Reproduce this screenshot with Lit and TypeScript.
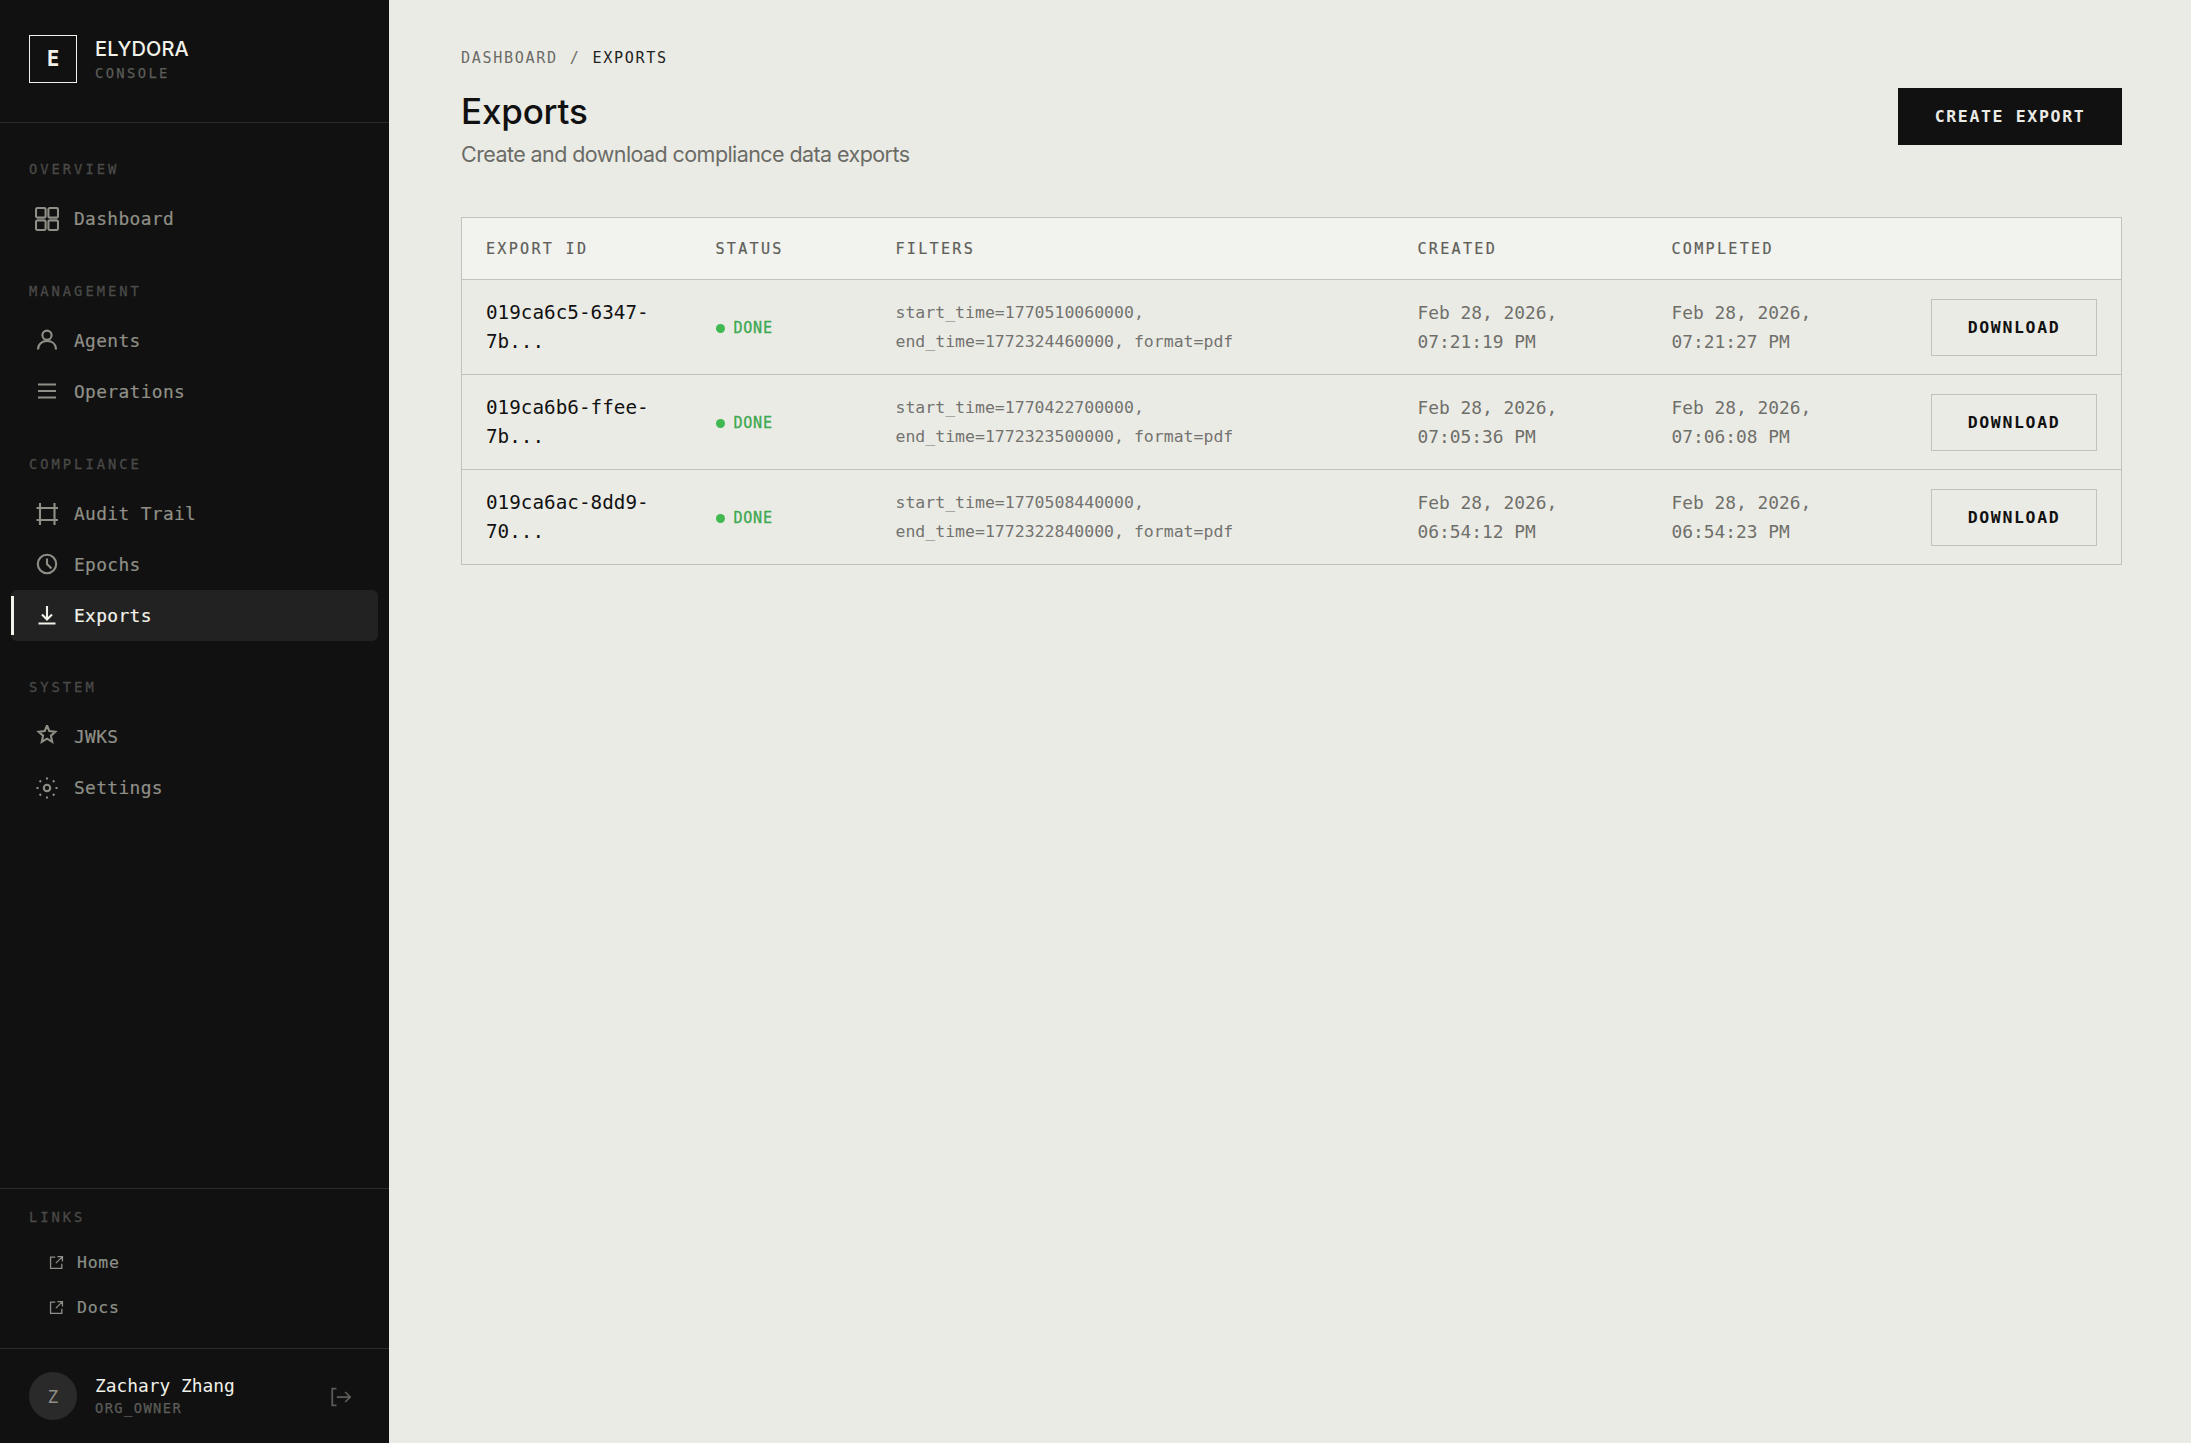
import { LitElement, css, html, svg } from 'lit'
import { customElement } from 'lit/decorators.js'

const icons = {
  dashboard: svg`<rect x="1" y="1" width="9.6" height="9.6" rx="1.6"/><rect x="13.4" y="1" width="9.6" height="9.6" rx="1.6"/><rect x="1" y="13.4" width="9.6" height="9.6" rx="1.6"/><rect x="13.4" y="13.4" width="9.6" height="9.6" rx="1.6"/>`,
  agents: svg`<circle cx="12" cy="7.2" r="4.6"/><path d="M3 21.5c0-5.5 4-8.5 9-8.5s9 3 9 8.5"/>`,
  operations: svg`<path d="M3 5.5h18M3 12h18M3 18.5h18"/>`,
  audit: svg`<path d="M5 2v22M19.5 2v22M1.5 7h21.5M1.5 19h21.5"/>`,
  epochs: svg`<circle cx="12" cy="12" r="9.2"/><path d="M12 6.5V12l4.5 4.5"/>`,
  exports: svg`<path d="M12 3v13M7 11.5l5 5 5-5M3.5 20.5h17"/>`,
  jwks: svg`<path d="M12 0.5l2.3 5.6 6 .6-4.4 4 1.3 6.2-5.2-3.2-5.2 3.2 1.3-6.2-4.4-4 6-.6z"/>`,
  settings: svg`<circle cx="12" cy="12" r="3.2"/><path d="M12 1.5v2M12 20.5v2M1.5 12h2M20.5 12h2M4.6 4.6l1.4 1.4M18 18l1.4 1.4M4.6 19.4l1.4-1.4M18 6l1.4-1.4"/>`,
  external: svg`<path d="M10 3.5H2.5v18h18V14M13.5 2.5h8v8M21 3L11 13"/>`,
  logout: svg`<path d="M6.5 2H1.5v20h5M7 12h16M17 6l6 6-6 6"/>`,
}

type IconName = keyof typeof icons

interface NavSection {
  title: string
  items: { label: string; icon: IconName; active?: boolean }[]
}

const sections: NavSection[] = [
  { title: 'OVERVIEW', items: [{ label: 'Dashboard', icon: 'dashboard' }] },
  {
    title: 'MANAGEMENT',
    items: [
      { label: 'Agents', icon: 'agents' },
      { label: 'Operations', icon: 'operations' },
    ],
  },
  {
    title: 'COMPLIANCE',
    items: [
      { label: 'Audit Trail', icon: 'audit' },
      { label: 'Epochs', icon: 'epochs' },
      { label: 'Exports', icon: 'exports', active: true },
    ],
  },
  {
    title: 'SYSTEM',
    items: [
      { label: 'JWKS', icon: 'jwks' },
      { label: 'Settings', icon: 'settings' },
    ],
  },
]

const exportsData = [
  {
    id: ['019ca6c5-6347-', '7b...'],
    filters: ['start_time=1770510060000,', 'end_time=1772324460000, format=pdf'],
    created: '07:21:19 PM',
    completed: '07:21:27 PM',
  },
  {
    id: ['019ca6b6-ffee-', '7b...'],
    filters: ['start_time=1770422700000,', 'end_time=1772323500000, format=pdf'],
    created: '07:05:36 PM',
    completed: '07:06:08 PM',
  },
  {
    id: ['019ca6ac-8dd9-', '70...'],
    filters: ['start_time=1770508440000,', 'end_time=1772322840000, format=pdf'],
    created: '06:54:12 PM',
    completed: '06:54:23 PM',
  },
]

function icon(name: IconName, cls = 'icon') {
  return html`<svg class=${cls} viewBox="0 0 24 24" fill="none" stroke="currentColor" stroke-width="2.1">${icons[name]}</svg>`
}

@customElement('app-root')
export class AppRoot extends LitElement {
  static styles = css`
    :host {
      display: flex;
      height: 1443px;
      background: #ebebe6;
      font-family: 'DejaVu Sans Mono', 'Liberation Mono', monospace;
      color: #111;
    }
    .sidebar {
      flex: 0 0 389px;
      display: flex;
      flex-direction: column;
      background: #111;
    }
    .brand {
      display: flex;
      align-items: center;
      gap: 18px;
      height: 123px;
      padding: 0 29px 4px;
      box-sizing: border-box;
      border-bottom: 1px solid #2a2a2a;
    }
    .logo {
      width: 48px;
      height: 48px;
      box-sizing: border-box;
      border: 1.5px solid #f2f2ea;
      display: grid;
      place-items: center;
      color: #f2f2ea;
      font-size: 21px;
      font-weight: 700;
    }
    .brand-name {
      font-family: Inter, sans-serif;
      font-size: 20px;
      font-weight: 500;
      letter-spacing: 0.1px;
      line-height: 26px;
      color: #f2f2ea;
    }
    .brand-sub {
      margin-top: 1px;
      font-size: 13.75px;
      letter-spacing: 2.4px;
      line-height: 20px;
      color: #5c5c58;
      -webkit-text-stroke: 0.25px currentColor;
    }
    nav {
      flex: 1;
      padding: 37.2px 11px 0;
    }
    .section {
      margin-bottom: 37.7px;
    }
    .section-title {
      padding-left: 18px;
      margin-bottom: 15px;
      font-size: 13.75px;
      line-height: 18px;
      letter-spacing: 3px;
      color: #4a4a48;
      -webkit-text-stroke: 0.3px currentColor;
    }
    .item {
      position: relative;
      display: flex;
      align-items: center;
      gap: 15px;
      height: 51px;
      padding-left: 24px;
      border-radius: 6px;
      font-size: 17.875px;
      letter-spacing: 0.36px;
      color: #8f8f87;
      -webkit-text-stroke: 0.2px currentColor;
    }
    .item.active {
      background: #222;
      color: #f2f2ea;
    }
    .item.active::before {
      content: '';
      position: absolute;
      left: 0;
      top: 6px;
      bottom: 6px;
      width: 3px;
      background: #f2f2ea;
    }
    .icon {
      width: 24px;
      height: 24px;
      flex: none;
    }
    .links {
      border-top: 1px solid #2a2a2a;
      padding: 19px 29px 18px;
      height: 160px;
      box-sizing: border-box;
    }
    .links .section-title {
      padding-left: 0;
      margin-bottom: 14px;
    }
    .link {
      display: flex;
      align-items: center;
      gap: 13px;
      height: 45px;
      padding-left: 20px;
      font-size: 16.5px;
      letter-spacing: 0.7px;
      color: #8a9088;
      -webkit-text-stroke: 0.2px currentColor;
    }
    .link-icon {
      width: 15px;
      height: 15px;
      color: #8f8f8a;
    }
    .user {
      display: flex;
      align-items: center;
      gap: 18px;
      height: 95px;
      padding: 0 38px 0 29px;
      box-sizing: border-box;
      border-top: 1px solid #2a2a2a;
    }
    .avatar {
      width: 48px;
      height: 48px;
      border-radius: 50%;
      background: #2a2a2a;
      color: #8f8f87;
      display: grid;
      place-items: center;
      font-size: 17.875px;
    }
    .user-info {
      flex: 1;
      margin-top: -2px;
    }
    .user-name {
      font-size: 17.875px;
      line-height: 25px;
      color: #f2f2ea;
    }
    .user-role {
      font-size: 13.75px;
      letter-spacing: 1.4px;
      line-height: 20px;
      color: #5c5c58;
      -webkit-text-stroke: 0.25px currentColor;
    }
    .logout {
      width: 20px;
      height: 20px;
      margin: 2px 0 0;
      color: #5c5c58;
    }
    main {
      flex: 1;
      min-width: 0;
      padding: 45px 69px 0 72px;
    }
    .crumbs {
      display: flex;
      gap: 12px;
      height: 26px;
      line-height: 26px;
      margin-bottom: 17px;
      font-size: 15.125px;
      letter-spacing: 1.65px;
      color: #6b6b66;
    }
    .crumbs b {
      font-weight: 400;
      color: #222;
    }
    .head {
      display: flex;
      justify-content: space-between;
      align-items: flex-start;
      margin-bottom: 48px;
    }
    h1 {
      margin: 1px 0 6px;
      font-family: Inter, sans-serif;
      font-size: 35px;
      line-height: 44px;
      font-weight: 500;
      letter-spacing: -0.2px;
      color: #111;
    }
    .sub {
      font-family: Inter, sans-serif;
      font-size: 21.5px;
      line-height: 30px;
      letter-spacing: -0.58px;
      color: #6b6b66;
    }
    .btn {
      display: flex;
      align-items: center;
      justify-content: center;
      box-sizing: border-box;
      height: 57px;
      font-size: 16.5px;
      font-weight: 700;
      letter-spacing: 1.65px;
    }
    .btn.primary {
      width: 224px;
      background: #111;
      color: #ebebe6;
    }
    .btn.outline {
      width: 166px;
      border: 1px solid #c2c2bd;
      color: #111;
    }
    table {
      width: 100%;
      border-collapse: collapse;
      table-layout: fixed;
      border: 1px solid #c2c2bd;
    }
    th {
      height: 61px;
      padding: 0 24px;
      background: #f2f3ee;
      border-bottom: 1px solid #c2c2bd;
      text-align: left;
      font-size: 15.125px;
      font-weight: 400;
      letter-spacing: 2.27px;
      color: #5f5f5a;
      -webkit-text-stroke: 0.2px currentColor;
    }
    td {
      height: 94px;
      padding: 0 24px;
      border-bottom: 1px solid #c2c2bd;
      font-size: 17.875px;
      line-height: 29px;
      color: #6f6f6a;
    }
    td.id {
      font-size: 19.25px;
      letter-spacing: 0.03px;
      color: #111;
    }
    td.filters {
      font-size: 16.5px;
      color: #737370;
    }
    td.action {
      padding-right: 24px;
    }
    td.action .btn {
      margin-left: auto;
    }
    .w-id { width: 230px; }
    .w-status { width: 180px; }
    .w-filters { width: 522px; }
    .w-date { width: 254px; }
    .status {
      display: flex;
      align-items: center;
      gap: 9px;
      margin-top: 2px;
      font-size: 15.125px;
      letter-spacing: 0.7px;
      color: #3da84f;
      -webkit-text-stroke: 0.3px currentColor;
    }
    .dot {
      width: 9px;
      height: 9px;
      border-radius: 50%;
      background: #3fb950;
    }
  `

  render() {
    return html`
      <aside class="sidebar">
        <div class="brand">
          <div class="logo">E</div>
          <div>
            <div class="brand-name">ELYDORA</div>
            <div class="brand-sub">CONSOLE</div>
          </div>
        </div>
        <nav>
          ${sections.map(
            (s) => html`
              <div class="section">
                <div class="section-title">${s.title}</div>
                ${s.items.map(
                  (i) => html`
                    <div class="item ${i.active ? 'active' : ''}">${icon(i.icon)}<span>${i.label}</span></div>
                  `,
                )}
              </div>
            `,
          )}
        </nav>
        <div class="links">
          <div class="section-title">LINKS</div>
          <div class="link">${icon('external', 'link-icon')}<span>Home</span></div>
          <div class="link">${icon('external', 'link-icon')}<span>Docs</span></div>
        </div>
        <div class="user">
          <div class="avatar">Z</div>
          <div class="user-info">
            <div class="user-name">Zachary Zhang</div>
            <div class="user-role">ORG_OWNER</div>
          </div>
          ${icon('logout', 'logout')}
        </div>
      </aside>
      <main>
        <div class="crumbs"><span>DASHBOARD</span><span>/</span><b>EXPORTS</b></div>
        <div class="head">
          <div>
            <h1>Exports</h1>
            <div class="sub">Create and download compliance data exports</div>
          </div>
          <div class="btn primary">CREATE EXPORT</div>
        </div>
        <table>
          <colgroup>
            <col class="w-id" /><col class="w-status" /><col class="w-filters" /><col class="w-date" /><col class="w-date" /><col />
          </colgroup>
          <thead>
            <tr><th>EXPORT ID</th><th>STATUS</th><th>FILTERS</th><th>CREATED</th><th>COMPLETED</th><th></th></tr>
          </thead>
          <tbody>
            ${exportsData.map(
              (r) => html`
                <tr>
                  <td class="id">${r.id[0]}<br />${r.id[1]}</td>
                  <td><div class="status"><span class="dot"></span>DONE</div></td>
                  <td class="filters">${r.filters[0]}<br />${r.filters[1]}</td>
                  <td>Feb 28, 2026,<br />${r.created}</td>
                  <td>Feb 28, 2026,<br />${r.completed}</td>
                  <td class="action"><div class="btn outline">DOWNLOAD</div></td>
                </tr>
              `,
            )}
          </tbody>
        </table>
      </main>
    `
  }
}
